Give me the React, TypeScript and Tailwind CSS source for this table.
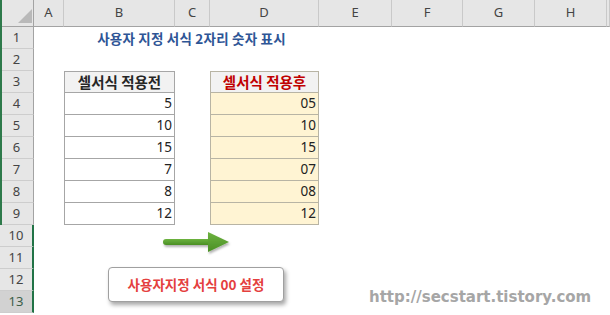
import React from "react";

const cols = ["A", "B", "C", "D", "E", "F", "G", "H", ""];
const before = ["5", "10", "15", "7", "8", "12"];
const after = ["05", "10", "15", "07", "08", "12"];

const font = { fontFamily: '"Noto Sans", "Noto Sans CJK KR", sans-serif' };
const kr = { fontFamily: '"Noto Sans CJK KR", sans-serif' };

export default function App() {
  const rows = Array.from({ length: 13 }, (_, i) => i + 1);
  return (
    <div className="relative w-[610px] h-[315px] overflow-hidden bg-white" style={font}>
      <div className="grid grid-cols-[34px_30px_111px_35px_109px_73px_71px_72px_72px_1fr] grid-rows-[27px_repeat(13,22px)]">
        {/* header row */}
        <div className="relative bg-[#e6e6e6] border-b border-r border-[#a3a3a3]">
          <svg className="absolute left-[18px] top-[9px]" width="14" height="14" viewBox="0 0 14 14">
            <polygon points="0,14 14,14 14,0" fill="#b9b9b9" />
          </svg>
        </div>
        {cols.map((c, i) => (
          <div
            key={i}
            className="flex items-center justify-center bg-[#e6e6e6] border-b border-b-[#a3a3a3] border-r border-r-[#c9c9c9] text-[13px] text-[#444]"
          >
            {c}
          </div>
        ))}
        {rows.map((r) => {
          const sel = r === 13;
          const cells: React.ReactNode[] = [];
          cells.push(
            <div
              key={"h" + r}
              className={
                "flex items-center justify-center border-b border-b-[#cdcdcd] text-[13px] " +
                (sel
                  ? "bg-[#d2d2d2] text-[#3b5e48] border-r-2 border-r-[#217346]"
                  : r >= 10
                  ? "bg-[#e6e6e6] text-[#444] border-r-2 border-r-[#217346]"
                  : "bg-[#e6e6e6] text-[#444] border-r border-r-[#a3a3a3]")
              }
            >
              {r}
            </div>
          );
          if (r === 1) {
            cells.push(<div key="a1" />);
            cells.push(
              <div
                key="t1"
                className="col-span-3 flex items-center justify-center pt-[1px] text-[13.5px] font-bold text-[#2e5596] tracking-[0.2px]"
                style={kr}
              >
                사용자 지정 서식 2자리 숫자 표시
              </div>
            );
            for (let k = 0; k < 5; k++) cells.push(<div key={"e1" + k} />);
          } else if (r >= 3 && r <= 9) {
            const head = r === 3;
            const idx = r - 4;
            cells.push(<div key={"a" + r} />);
            cells.push(
              <div
                key={"b" + r}
                className={
                  "flex items-center border-l border-r border-b border-[#a6a6a6] " +
                  (head
                    ? "border-t justify-center bg-[#f2f2f2] font-bold text-[14.5px] text-[#262626]"
                    : "justify-end pr-[2px] bg-white text-[13.5px] text-[#222]")
                }
                style={head ? kr : undefined}
              >
                {head ? "셀서식 적용전" : before[idx]}
              </div>
            );
            cells.push(<div key={"c" + r} />);
            cells.push(
              <div
                key={"d" + r}
                className={
                  "flex items-center border-l border-r border-b border-[#b8b4a4] " +
                  (head
                    ? "border-t justify-center bg-[#f2f2f2] font-bold text-[14.5px] text-[#c00000]"
                    : "justify-end pr-[2px] bg-[#fff4d3] text-[13.5px] text-[#222]")
                }
                style={head ? kr : undefined}
              >
                {head ? "셀서식 적용후" : after[idx]}
              </div>
            );
            for (let k = 0; k < 5; k++) cells.push(<div key={"e" + r + k} />);
          } else {
            for (let k = 0; k < 9; k++) cells.push(<div key={"x" + r + k} />);
          }
          return cells;
        })}
      </div>

      {/* left green frame edge */}
      <div className="absolute left-0 top-0 w-[2px] h-[225px] bg-[#2e7a4b]" />

      {/* arrow */}
      <svg className="absolute left-[160px] top-[229px]" width="74" height="28" viewBox="0 0 74 28">
        <defs>
          <linearGradient id="g" x1="0" y1="0" x2="0" y2="1">
            <stop offset="0" stopColor="#6db33f" />
            <stop offset="1" stopColor="#4a8f25" />
          </linearGradient>
          <filter id="s" x="-20%" y="-40%" width="140%" height="180%">
            <feDropShadow dx="1" dy="2" stdDeviation="1.2" floodColor="#000" floodOpacity="0.3" />
          </filter>
        </defs>
        <g filter="url(#s)">
          <rect x="3" y="10" width="48" height="6" rx="3" fill="url(#g)" />
          <polygon points="48,3 69,13 48,23" fill="url(#g)" />
        </g>
      </svg>

      {/* note box */}
      <div
        className="absolute left-[108px] top-[267px] w-[176px] h-[35px] flex items-center justify-center bg-white border border-[#a0a0a0] rounded-[4px] shadow-[2px_3px_4px_rgba(0,0,0,0.35)] text-[13.5px] font-bold text-[#e4403e]"
        style={kr}
      >
        사용자지정 서식 00 설정
      </div>

      {/* watermark */}
      <div
        className="absolute left-[369px] top-[286px] text-[15px] font-bold text-[#a6a6a6]"
        style={{ fontFamily: '"DejaVu Sans", sans-serif' }}
      >
        http://secstart.tistory.com
      </div>
    </div>
  );
}
